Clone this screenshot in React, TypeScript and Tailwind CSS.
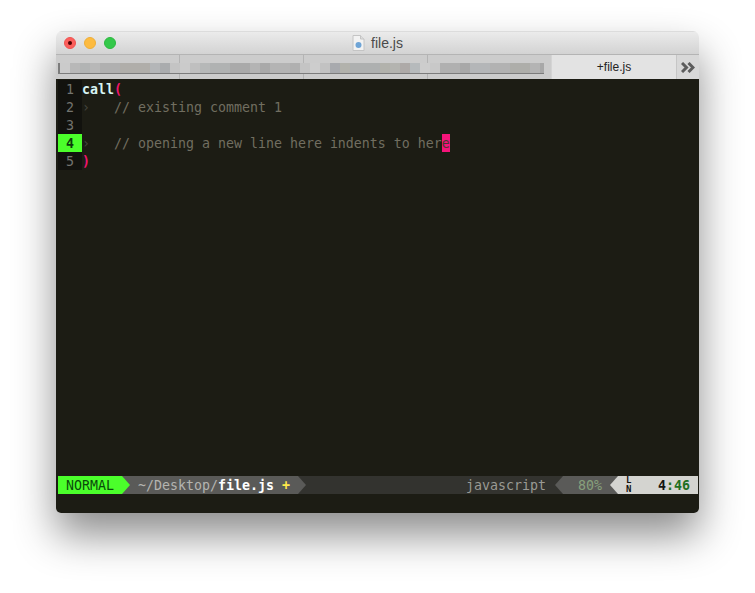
const mono = "font-['DejaVu_Sans_Mono','Liberation_Mono',monospace] text-[13.29px] leading-[20px]";
const row = "flex h-[18px]";

// pixelated bits of the blurred-out tab labels
const tabBlur = [
  ["w-[10px]", "bg-[#cbcbcb]"], ["w-[10px]", "bg-[#b8b8b8]"], ["w-[10px]", "bg-[#b2b4b4]"], ["w-[10px]", "bg-[#b8b8b8]"],
  ["w-[20px]", "bg-[#b0b0b0]"], ["w-[30px]", "bg-[#b0aeaa]"], ["w-[10px]", "bg-[#b4b6b8]"], ["w-[10px]", "bg-[#aaacae]"],
  ["w-[10px]", "bg-[#c4c4c4]"], ["w-[10px]", "bg-[#cbcbcb]"], ["w-[10px]", "bg-[#bfbfbf]"], ["w-[10px]", "bg-[#b6b8b8]"],
  ["w-[20px]", "bg-[#b0b2b2]"], ["w-[20px]", "bg-[#aaaaaa]"], ["w-[10px]", "bg-[#b4b4b4]"], ["w-[10px]", "bg-[#a9a9a9]"],
  ["w-[20px]", "bg-[#b4b4b4]"], ["w-[10px]", "bg-[#b0b0b0]"], ["w-[10px]", "bg-[#c4c4c4]"], ["w-[10px]", "bg-[#cdcdcd]"],
  ["w-[10px]", "bg-[#c2c2c2]"], ["w-[10px]", "bg-[#a8aaae]"], ["w-[10px]", "bg-[#b2b2ac]"], ["w-[30px]", "bg-[#aeb0b0]"],
  ["w-[10px]", "bg-[#b2b2ac]"], ["w-[10px]", "bg-[#b4b4b0]"], ["w-[10px]", "bg-[#aeaaa8]"], ["w-[10px]", "bg-[#b6babc]"],
  ["w-[10px]", "bg-[#cdcdcd]"], ["w-[10px]", "bg-[#c8c8c8]"], ["w-[20px]", "bg-[#b0b0b0]"], ["w-[10px]", "bg-[#a8a8a8]"],
  ["w-[20px]", "bg-[#b4b6b8]"], ["w-[20px]", "bg-[#b2b2b2]"], ["w-[20px]", "bg-[#aeaeaa]"], ["w-[10px]", "bg-[#b4b4b4]"],
  ["w-[4px]", "bg-[#a8a8a8]"],
];

function Tabs() {
  return (
    <div className="flex h-[25px] shrink-0 bg-[#cccccc] border-t border-[#b4b4b4]">
      <div className="relative w-[495px] pl-[2px] pt-[8px]">
        <div className="absolute left-[123px] top-0 h-full w-px bg-[#b4b4b4]" />
        <div className="absolute left-[247px] top-0 h-full w-px bg-[#b4b4b4]" />
        <div className="absolute left-[371px] top-0 h-full w-px bg-[#b4b4b4]" />
        <div className="relative flex h-[11px] w-[486px] border-l-2 border-b border-[#7c7c7c] bg-[#cccccc]">
          {tabBlur.map(([w, bg], i) => (
            <div key={i} className={`${w} ${bg} h-full`} />
          ))}
        </div>
      </div>
      <div className="w-[125px] bg-[#e3e3e3] flex items-center justify-center text-[12px] text-[#222] font-['Liberation_Sans',sans-serif] border-l border-[#d4d4d4]">
        +file.js
      </div>
      <div className="flex-1 bg-[#d8d8d8] border-l border-[#c6c6c6] flex items-center justify-center">
        <svg width="14" height="11" viewBox="0 0 14 11" fill="none" stroke="#5c5c5c" strokeWidth="3">
          <path d="M1 1l4.5 4.5L1 10" />
          <path d="M7.5 1l4.5 4.5L7.5 10" />
        </svg>
      </div>
    </div>
  );
}

function Gutter({ n, active }: { n: number; active?: boolean }) {
  return (
    <span
      className={`w-[24px] shrink-0 pr-[8px] text-right ${
        active ? "bg-[#4bff2b] text-[#0c3a0c] font-bold" : "bg-[#12120e] text-[#74746e]"
      }`}
    >
      {n}
    </span>
  );
}

function Editor() {
  return (
    <div className={`${mono} flex-1 pt-[1px] pl-[2px] text-[#716e60] whitespace-pre`}>
      <div className={row}>
        <Gutter n={1} />
        <span className="text-[#d8f4f4] font-bold">call</span>
        <span className="text-[#f0146e] font-bold">(</span>
      </div>
      <div className={row}>
        <Gutter n={2} />
        <span className="text-[#45453e]">{"›   "}</span>
        <span>// existing comment 1</span>
      </div>
      <div className={row}>
        <Gutter n={3} />
      </div>
      <div className={row}>
        <Gutter n={4} active />
        <span className="text-[#45453e]">{"›   "}</span>
        <span>// opening a new line here indents to her</span>
        <span className="bg-[#f5147a] text-[#4a3a30]">e</span>
      </div>
      <div className={row}>
        <Gutter n={5} />
        <span className="text-[#f0146e] font-bold">)</span>
      </div>
    </div>
  );
}

function StatusLine() {
  return (
    <div className={`${mono} ${row} ml-[2px] mr-[1px] bg-[#33332f] whitespace-pre`}>
      <span className="w-[64px] pl-[8px] bg-[#4bff2b] text-[#0a4a0a]">NORMAL</span>
      <span className="bg-[#5a5a58] border-y-[9px] border-y-transparent border-l-[8px] border-l-[#4bff2b]" />
      <span className="w-[168px] pl-[8px] bg-[#5a5a58] text-[#b4b4b0]">
        ~/Desktop/
        <b className="text-white">file.js</b>
        <b className="text-[#ffe94a]"> +</b>
      </span>
      <span className="border-y-[9px] border-y-transparent border-l-[8px] border-l-[#5a5a58]" />
      <span className="flex-1 pr-[9px] text-right text-[#9a9a94]">javascript</span>
      <span className="border-y-[9px] border-y-transparent border-r-[8px] border-r-[#5a5a58]" />
      <span className="w-[47px] pr-[8px] text-right bg-[#5a5a58] text-[#87a07c]">80%</span>
      <span className="bg-[#5a5a58] border-y-[9px] border-y-transparent border-r-[8px] border-r-[#d4d4d0]" />
      <span className="w-[80px] flex items-center bg-[#d4d4d0] text-[#141410]">
        <span className="w-[32px] pl-[8px] flex flex-col text-[9px] leading-[9px] font-bold">
          <span>L</span>
          <span>N</span>
        </span>
        <span className="self-start pl-[8px] font-bold">
          4<span className="text-[#1f6f1f]">:46</span>
        </span>
      </span>
    </div>
  );
}

export default function App() {
  return (
    <div className="min-h-[593px] bg-white pt-[31px] pl-[56px]">
      <div className="w-[643px] h-[482px] flex flex-col rounded-t-[6px] rounded-b-[5px] overflow-hidden shadow-[0_22px_42px_rgba(0,0,0,0.45)]">
        <div className="relative h-[23px] shrink-0 flex items-center justify-center gap-[6px] bg-gradient-to-b from-[#ebebeb] to-[#d3d3d3] border-t border-[#dcdcdc] font-['Liberation_Sans',sans-serif] text-[14px] text-[#4a4a4a]">
          <div className="absolute left-[8px] top-[5px] flex gap-[8px]">
            <span className="w-[12px] h-[12px] rounded-full bg-[#fc5f5c] border border-[#ee5350] flex items-center justify-center">
              <span className="w-[4px] h-[4px] rounded-full bg-[#4d0000]" />
            </span>
            <span className="w-[12px] h-[12px] rounded-full bg-[#fdbb40] border border-[#eeae38]" />
            <span className="w-[12px] h-[12px] rounded-full bg-[#34c84a] border border-[#2cb83f]" />
          </div>
          <svg width="13" height="16" viewBox="0 0 13 16">
            <path d="M1 .5h7.5L12 4v11.5H1z" fill="#f2f2f2" stroke="#c4c4c4" />
            <path d="M8.5.5V4H12" fill="#dddddd" stroke="#c4c4c4" />
            <circle cx="6.5" cy="10" r="3" fill="#6ea4d6" />
          </svg>
          <span>file.js</span>
        </div>
        <Tabs />
        <div className="flex-1 flex flex-col bg-[#1c1c14]">
          <Editor />
          <StatusLine />
          <div className="h-[19px] shrink-0" />
        </div>
      </div>
    </div>
  );
}
